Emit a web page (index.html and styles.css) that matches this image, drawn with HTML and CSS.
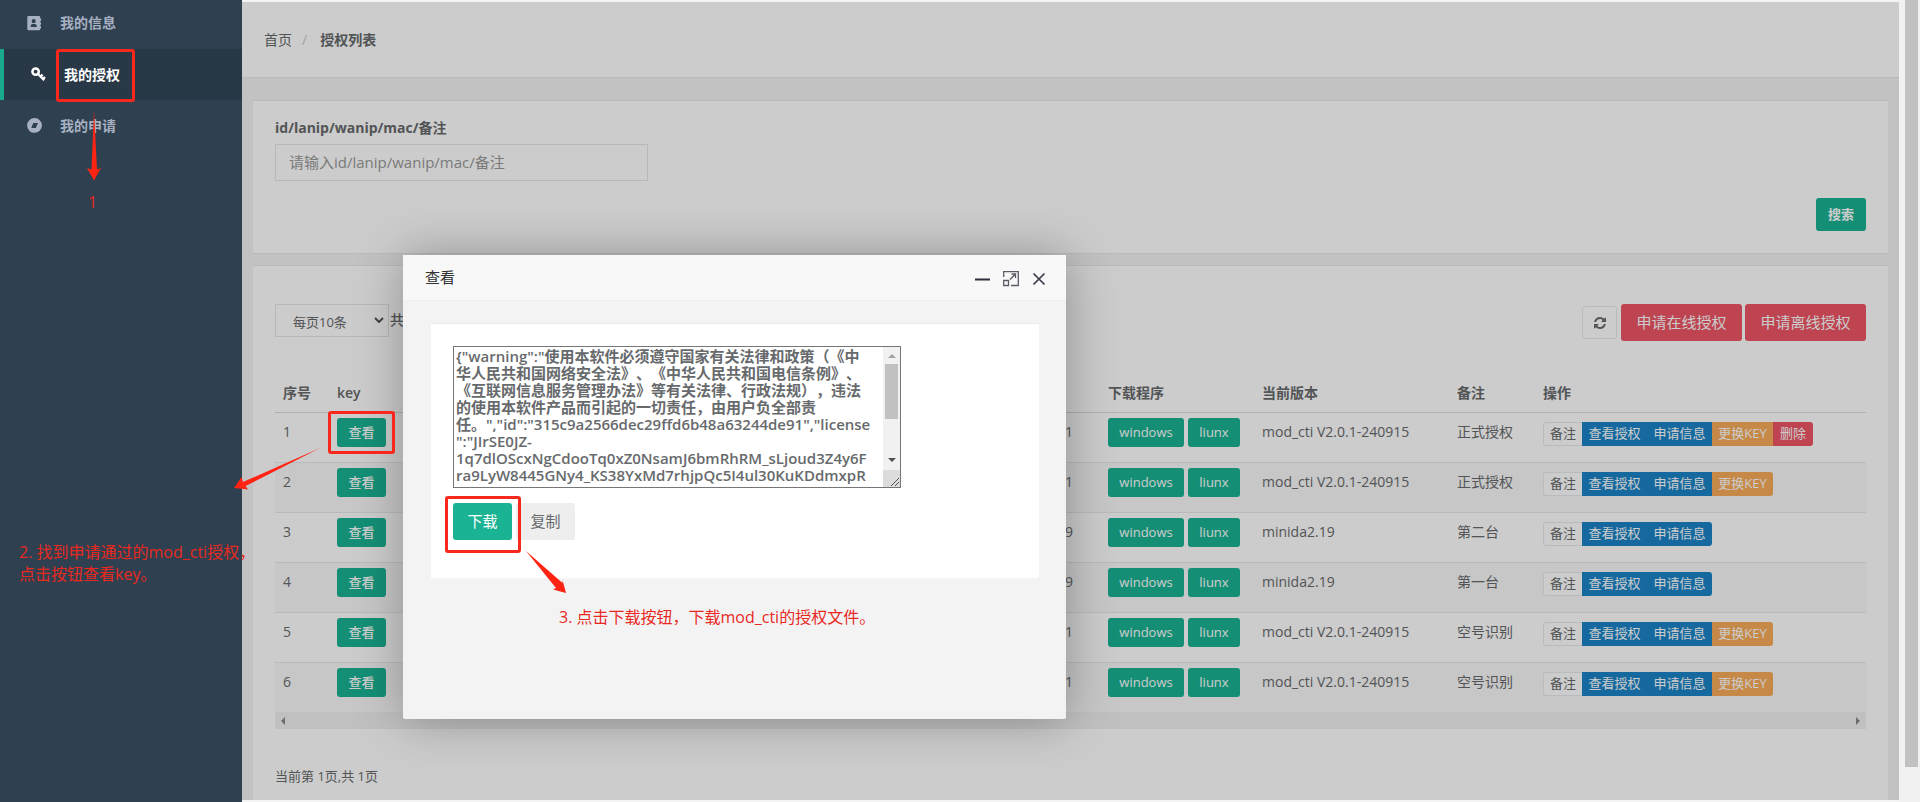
FILE: index.html
```html
<!DOCTYPE html>
<html lang="zh-CN">
<head>
<meta charset="utf-8">
<title>授权列表</title>
<link rel="stylesheet" href="styles.css">
</head>
<body>
<nav class="sidebar">
  <a class="nav-item" href="#info">
    <svg class="nav-icon" viewBox="0 0 15 15"><path fill="currentColor" fill-rule="evenodd" d="M1.500 0h10.500a1.200 1.200 0 0 1 1.200 1.200V2.500h.8v2.500h-.8v1.300h.8v2.500h-.8v1.300h.8v2.500h-.8v.5a1.200 1.200 0 0 1-1.200 1.200H1.500A1.200 1.200 0 0 1 .3 13.100V1.200A1.200 1.200 0 0 1 1.500 0zM6.700 3.100a2 2 0 1 0 0 4.100 2 2 0 0 0 0-4.100zM3.700 11h6v-1.100c0-1.200-.9-2-2-2H5.700c-1.100 0-2 .8-2 2z"/></svg>
    <span>我的信息</span></a>
  <a class="nav-item active" href="#license">
    <svg class="nav-icon" viewBox="0 0 15 15"><g fill="none" stroke="currentColor"><circle cx="4.600" cy="4.600" r="3.200" stroke-width="2.500"/><path stroke-width="2.300" d="M7 7l6.200 6.200M9.600 9.600l2-2M12 12l2-2"/></g></svg>
    <span>我的授权</span></a>
  <a class="nav-item" href="#apply">
    <svg class="nav-icon" viewBox="0 0 15 15"><path fill="currentColor" fill-rule="evenodd" d="M7.500 0a7.400 7.400 0 1 1 0 14.800 7.400 7.400 0 0 1 0-14.800zM6.300 5L4.200 9.900h4.600L11 5z"/></svg>
    <span>我的申请</span></a>
</nav>

<main class="page">
  <header class="page-head">
    <ol class="breadcrumb"><li><a href="#home">首页</a></li><li class="sep">/</li><li><strong>授权列表</strong></li></ol>
  </header>

  <form class="panel search">
    <label for="q">id/lanip/wanip/mac/备注</label>
    <input id="q" type="text" placeholder="请输入id/lanip/wanip/mac/备注">
    <button class="btn primary search-btn" type="button">搜索</button>
  </form>

  <section class="panel list">
    <div class="toolbar">
      <select aria-label="每页条数"><option>每页10条</option></select><span class="total">共</span>
      <div class="tools">
        <button class="refresh" type="button" aria-label="刷新"><svg viewBox="0 0 1536 1536"><path fill="currentColor" d="M1511 928q0 5-1 7-64 268-268 434.500T764 1536q-146 0-282.500-55T238 1324l-129 129q-19 19-45 19t-45-19-19-45V960q0-26 19-45t45-19h448q26 0 45 19t19 45-19 45l-137 137q71 66 161 102t187 36q134 0 250-65t186-179q11-17 53-117 8-23 30-23h192q13 0 22.500 9.500t9.500 22.500zm25-800v448q0 26-19 45t-45 19h-448q-26 0-45-19t-19-45 19-45l138-138Q969 256 768 256q-134 0-250 65T332 500q-11 17-53 117-8 23-30 23H50q-13 0-22.500-9.500T18 608v-7q65-268 270-434.500T768 0q146 0 284 55.500T1297 212l130-129q19-19 45-19t45 19 19 45z"/></svg></button>
        <button class="btn-lg danger" type="button">申请在线授权</button>
        <button class="btn-lg danger" type="button">申请离线授权</button>
      </div>
    </div>
    <table>
      <colgroup><col class="c-no"><col class="c-key"><col class="c-count"><col class="c-down"><col class="c-ver"><col class="c-note"><col class="c-ops"></colgroup>
      <thead><tr><th>序号</th><th>key</th><th></th><th>下载程序</th><th>当前版本</th><th>备注</th><th>操作</th></tr></thead>
      <tbody>
        <tr><td>1</td><td><button class="btn primary">查看</button></td><td>1</td><td><div class="pair"><button class="btn primary">windows</button><button class="btn primary">liunx</button></div></td><td>mod_cti V2.0.1-240915</td><td>正式授权</td><td><div class="group"><button class="plain">备注</button><button class="info">查看授权</button><button class="info">申请信息</button><button class="warn">更换KEY</button><button class="danger">删除</button></div></td></tr>
        <tr><td>2</td><td><button class="btn primary">查看</button></td><td>1</td><td><div class="pair"><button class="btn primary">windows</button><button class="btn primary">liunx</button></div></td><td>mod_cti V2.0.1-240915</td><td>正式授权</td><td><div class="group"><button class="plain">备注</button><button class="info">查看授权</button><button class="info">申请信息</button><button class="warn">更换KEY</button></div></td></tr>
        <tr><td>3</td><td><button class="btn primary">查看</button></td><td>9</td><td><div class="pair"><button class="btn primary">windows</button><button class="btn primary">liunx</button></div></td><td>minida2.19</td><td>第二台</td><td><div class="group"><button class="plain">备注</button><button class="info">查看授权</button><button class="info">申请信息</button></div></td></tr>
        <tr><td>4</td><td><button class="btn primary">查看</button></td><td>9</td><td><div class="pair"><button class="btn primary">windows</button><button class="btn primary">liunx</button></div></td><td>minida2.19</td><td>第一台</td><td><div class="group"><button class="plain">备注</button><button class="info">查看授权</button><button class="info">申请信息</button></div></td></tr>
        <tr><td>5</td><td><button class="btn primary">查看</button></td><td>1</td><td><div class="pair"><button class="btn primary">windows</button><button class="btn primary">liunx</button></div></td><td>mod_cti V2.0.1-240915</td><td>空号识别</td><td><div class="group"><button class="plain">备注</button><button class="info">查看授权</button><button class="info">申请信息</button><button class="warn">更换KEY</button></div></td></tr>
        <tr><td>6</td><td><button class="btn primary">查看</button></td><td>1</td><td><div class="pair"><button class="btn primary">windows</button><button class="btn primary">liunx</button></div></td><td>mod_cti V2.0.1-240915</td><td>空号识别</td><td><div class="group"><button class="plain">备注</button><button class="info">查看授权</button><button class="info">申请信息</button><button class="warn">更换KEY</button></div></td></tr>
      </tbody>
    </table>
    <div class="hscroll"><svg viewBox="0 0 4 8"><path d="M4 0v8L0 4z"/></svg><svg viewBox="0 0 4 8"><path d="M0 0v8l4-4z"/></svg></div>
    <p class="pager">当前第 1页,共 1页</p>
  </section>
</main>

<div class="rail"><div class="rail-thumb"></div></div>

<div class="dialog" role="dialog" aria-label="查看">
  <div class="dialog-head"><span>查看</span>
    <div class="dialog-tools">
      <button type="button" aria-label="最小化"><svg viewBox="0 0 16 16"><path d="M0 8.500h15" stroke="#2e2d3c" stroke-width="2"/></svg></button>
      <button type="button" aria-label="最大化"><svg viewBox="0 0 16 16"><g fill="none" stroke="#5c5c68" stroke-width="1.300"><path d="M.7 6V.7h14.600v13.800H8M.7 9.500h4.800v5H.7zM7 8.500L12.500 3M8.500 3h4v4"/></g></svg></button>
      <button type="button" aria-label="关闭"><svg viewBox="0 0 16 16"><path d="M2.500 2.500l11 11m0-11l-11 11" stroke="#3c3b4a" stroke-width="1.700"/></svg></button>
    </div>
  </div>
  <div class="dialog-card">
    <div class="key-box">
    <textarea aria-label="key">{"warning":"使用本软件必须遵守国家有关法律和政策（《中
华人民共和国网络安全法》、《中华人民共和国电信条例》、
《互联网信息服务管理办法》等有关法律、行政法规），违法
的使用本软件产品而引起的一切责任，由用户负全部责
任。","id":"315c9a2566dec29ffd6b48a63244de91","license
":"JIrSE0JZ-
1q7dlOScxNgCdooTq0xZ0NsamJ6bmRhRM_sLjoud3Z4y6F
ra9LyW8445GNy4_KS38YxMd7rhjpQc5I4ul30KuKDdmxpR
fnwcazsemuonxvrcawsecnmzouexrnmasoe
Wn3xKd82mPq0sVbT6yLr4cZeA91uHgRt5
Qe7YwN2oXj8mDs_Kf4vGh6bLp3TzUa0
Ri9Cx5kBn1JtMw7EyPo2SdHqFl8ZgVu
m4Ae6"}</textarea>
      <div class="vscroll"><svg viewBox="0 0 8 4"><path fill="#a3a3a3" d="M0 4l4-4 4 4z"/></svg><div class="vthumb"></div><svg viewBox="0 0 8 4"><path fill="#505050" d="M0 0l4 4 4-4z"/></svg></div>
      <svg class="grip" viewBox="0 0 17 17"><path d="M8 16l8-8M12 16l4-4" stroke="#555"/></svg>
    </div>
    <div class="dialog-actions"><button class="btn-lg primary" type="button">下载</button><button class="btn-lg copy" type="button">复制</button></div>
  </div>
</div>

<div class="mark mark-nav"></div>
<div class="mark mark-view"></div>
<div class="mark mark-save"></div>
<svg class="arrows" viewBox="0 0 900 620"><g fill="#ff2313"><path d="M94 110L97 169.500L101 168L94 180.500L87 168L91.500 169.500z"/><path d="M320 448L245.500 486L248 489.500L234 488L241.500 477L243 482z"/><path d="M526 551L562.500 583L562.500 580L566 593L553 589.500L556 588z"/></g></svg>
<p class="note note-1">1</p>
<p class="note note-2">2. 找到申请通过的mod_cti授权，<br>点击按钮查看key。</p>
<p class="note note-3">3. 点击下载按钮，下载mod_cti的授权文件。</p>
</body>
</html>
```
FILE: styles.css
```css
* { box-sizing: border-box; }
body {
  margin: 0;
  min-height: 100vh;
  display: flex;
  position: relative;
  overflow: hidden;
  background: #f3f3f4;
  color: #676a6c;
  font: 14px/20px "Open Sans", "Noto Sans CJK SC", sans-serif;
  text-spacing-trim: space-all;
}
button, input, select, textarea { font-family: inherit; color: inherit; }
button { border: 0; padding: 0; cursor: pointer; white-space: nowrap; }
a { color: inherit; text-decoration: none; }

.sidebar { width: 242px; flex: none; background: #2f4050; overflow: hidden; }
.nav-item {
  display: flex; align-items: center; gap: 18px;
  height: 51px; padding-left: 27px;
  color: #a7b1c2; font-weight: 600;
}
.nav-item:first-child { height: 49px; padding-bottom: 3px; }
.nav-item.active { background: #293846; border-left: 4px solid #19aa8d; color: #fff; }
.nav-icon { width: 15px; height: 15px; }

.page {
  flex: 1; min-width: 0; position: relative;
  margin: 2px 0; background: #f3f3f4;
  display: flex; flex-direction: column;
}
.page::after { content: ""; position: absolute; inset: 0; background: rgba(0, 0, 0, .2); }
.page-head { height: 76px; padding: 28px 22px; background: #fff; border-bottom: 1px solid #e7eaec; }
.breadcrumb { display: flex; margin: 0; padding: 0; list-style: none; }
.breadcrumb .sep { padding: 0 13px 0 10px; color: #ccc; }
.breadcrumb strong { font-weight: 600; }
.panel { margin: 0 11px; padding: 0 22px; background: #fff; border: solid #e7eaec; border-width: 1px 0; }

.search { margin-top: 22px; height: 154px; padding-top: 17px; display: flex; flex-direction: column; }
.search label { font-weight: 700; }
.search input {
  width: 373px; height: 37px; margin-top: 6px; padding: 0 13px 2px;
  border: 1px solid #e5e6e7; background: #fff; font-size: 15px;
}
.search input::placeholder { color: #999; }
.search .search-btn { align-self: flex-end; width: 50px; height: 33px; margin-top: 17px; padding-bottom: 2px; font-weight: 600; }

.list { margin-top: 11px; padding-top: 38px; flex: 1; border-bottom: 0; }
.toolbar { display: flex; align-items: flex-start; }
.toolbar select {
  appearance: none; width: 114px; height: 33px; padding: 2px 0 0 17px;
  border: 1px solid #e5e6e7; border-radius: 0; font-size: 13px;
  background: #fff url("data:image/svg+xml,%3Csvg xmlns='http://www.w3.org/2000/svg' viewBox='0 0 10 6'%3E%3Cpath d='M1 1l4 4 4-4' fill='none' stroke='%23555' stroke-width='2'/%3E%3C/svg%3E") 98px 12px / 10px 6px no-repeat;
}
.total { padding: 6px 0 0 1px; font-weight: 500; }
.tools { margin-left: auto; display: flex; gap: 3px; align-items: center; }
.refresh {
  width: 35px; height: 33px; margin-right: 1px;
  background: #fff; border: 1px solid #e7eaec; border-radius: 3px;
  display: flex; align-items: center; justify-content: center;
}
.refresh svg { width: 12px; height: 12px; }
.btn { height: 29px; min-width: 49px; padding: 0 11px; border-radius: 3px; font-size: 13px; font-weight: 500; line-height: 20px; }
.btn-lg { height: 37px; min-width: 59px; padding: 0 0 2px; border-radius: 3px; font-size: 15px; }
.tools .btn-lg { width: 121px; }
.primary { background: #1ab394; color: #fff; }
.danger { background: #ed5565; color: #fff; }
.info { background: #1c84c6; color: #fff; }
.warn { background: #f8ac59; color: #fff; }
.plain { background: #fff; border: solid #e7eaec; border-width: 1px 0 1px 1px; }

table { width: 100%; margin-top: 31px; table-layout: fixed; border-collapse: collapse; }
.c-no { width: 54px; }
.c-count { width: 43px; }
.c-down { width: 154px; }
.c-ver { width: 195px; }
.c-note { width: 86px; }
.c-ops { width: 331px; }
th { height: 40px; padding: 2px 8px 0; text-align: left; font-weight: 600; border-bottom: 1px solid #ddd; }
td { height: 50px; padding: 5px 8px 0; vertical-align: top; border-top: 1px solid #e7eaec; line-height: 28px; }
td .btn { display: block; }
tbody tr:nth-child(even) { background: #f9f9f9; }
.pair { display: flex; gap: 4px; }
.pair .btn:first-child { width: 76px; }
.pair .btn:last-child { width: 52px; }
.group { display: flex; margin-top: 4px; }
.group button { height: 24px; padding: 0 6px 2px; font-size: 13px; line-height: 20px; }
.group .info { width: 65px; }
.group .warn { width: 61px; }
.group .danger { width: 40px; }
.group button:first-child { border-radius: 3px 0 0 3px; }
.group button:last-child { border-radius: 0 3px 3px 0; }
.hscroll { height: 17px; padding: 0 6px; display: flex; justify-content: space-between; align-items: center; background: #f1f1f1; }
.hscroll svg { width: 4px; height: 8px; fill: #888; }
.pager { margin: 37px 0 12px; font-size: 13px; }

.rail { width: 21px; flex: none; padding: 0 2px 0 6px; background: #f1f1f1; }
.rail-thumb { height: 767px; background: #c1c1c1; }

.dialog {
  position: absolute; left: 403px; top: 255px; width: 663px; height: 464px;
  background: #f3f3f4; border-radius: 2px; box-shadow: 1px 1px 50px rgba(0, 0, 0, .3);
}
.dialog-head {
  height: 46px; padding: 0 19px 2px 22px; display: flex; align-items: center; justify-content: space-between;
  background: #f8f8f8; border-bottom: 1px solid #eee; color: #333; font-size: 15px;
}
.dialog-tools { display: flex; gap: 12px; padding-top: 4px; }
.dialog-tools button { background: none; width: 16px; height: 16px; }
.dialog-tools svg { display: block; width: 16px; height: 16px; }
.dialog-card { margin: 22px 27px 0 28px; height: 255px; padding: 22px; background: #fff; border-top: 1px solid #e7eaec; }
.key-box { position: relative; width: 448px; height: 142px; }
textarea {
  display: block; width: 100%; height: 100%; padding: 1px 17px 1px 2px; margin: 0;
  border: 1px solid #767676; border-radius: 0; resize: none; overflow: hidden; white-space: pre;
  font-size: 15px; line-height: 17px; font-weight: 600; text-spacing-trim: space-all;
}
.vscroll {
  position: absolute; top: 1px; right: 1px; bottom: 18px; width: 17px; padding: 7px 2px 8px;
  display: flex; flex-direction: column; align-items: center; background: #f1f1f1;
}
.vscroll svg { width: 8px; height: 4px; }
.vthumb { width: 100%; height: 55px; margin: 6px 0 auto; background: #c1c1c1; }
.grip { position: absolute; right: 1px; bottom: 1px; width: 17px; height: 17px; background: #dcdcdc; }
.dialog-actions { display: flex; gap: 4px; margin-top: 15px; }
.copy { background: #eee; }

.mark { position: absolute; border: 3px solid #f9281c; border-radius: 3px; pointer-events: none; }
.mark-nav { left: 56px; top: 49px; width: 79px; height: 53px; }
.mark-view { left: 328px; top: 411px; width: 67px; height: 43px; }
.mark-save { left: 445px; top: 496px; width: 76px; height: 57px; }
.arrows { position: absolute; left: 0; top: 0; width: 900px; height: 620px; pointer-events: none; }
.note { position: absolute; margin: 0; color: #e8291f; font-size: 16px; line-height: 22px; white-space: nowrap; }
.note-1 { left: 88px; top: 191px; }
.note-2 { left: 19px; top: 541px; }
.note-3 { left: 559px; top: 606px; }
```
